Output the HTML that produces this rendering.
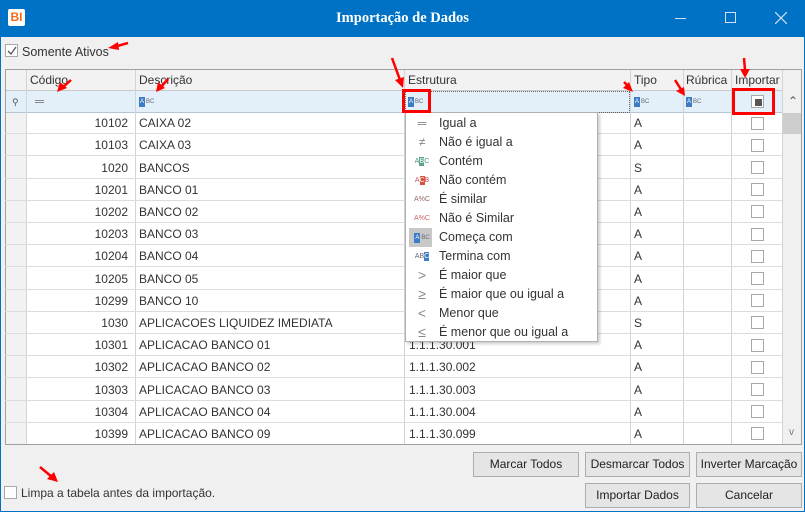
<!DOCTYPE html>
<html><head><meta charset="utf-8"><style>
*{box-sizing:border-box;margin:0;padding:0}
body{width:805px;height:512px;overflow:hidden;background:#f0f0f0;font-family:"Liberation Sans",sans-serif;font-size:12px;color:#333;position:relative}
.a{position:absolute}
.title{left:0;top:0;width:805px;height:37px;background:#0072c6;color:#fff}
.frame{left:0;top:37px;width:805px;height:475px;border:1px solid #0072c6;border-top:none}
.grid{left:5px;top:69px;width:797px;height:376px;border:1px solid #a0a0a0;background:#fff;overflow:hidden}
.hdr{background:#f2f2f2;border-bottom:1px solid #c8c8c8}
.vl{width:1px;background:#d4d4d4}
.row{left:0;width:777px;height:1px;background:#dcdcdc}
.t{position:absolute;white-space:nowrap;font-size:12px;line-height:14px;color:#333}
.cb{width:13px;height:13px;border:1px solid #a8a8a8;background:#fff}
.btn{height:25px;border:1px solid #adadad;background:#e5e5e5;text-align:center;line-height:23px;font-size:12px;color:#222}
.abc{display:flex;align-items:center;height:10px;font-size:6px;line-height:10px;color:#667}
.abc b{display:block;width:6px;height:10px;background:#3d7cc4;color:#fff;font-size:6px;text-align:center;line-height:10px;font-weight:normal;margin-right:1px}
.menu{left:405px;top:112px;width:193px;height:230px;background:#fff;border:1px solid #b0b0b0;box-shadow:2px 2px 3px rgba(0,0,0,.2)}
.mi{position:absolute;left:33px;font-size:12.5px;line-height:15px;color:#333;white-space:nowrap}
.ic{position:absolute;left:6px;width:20px;height:15px;display:flex;align-items:center;justify-content:center;color:#888;font-size:12px;line-height:15px}
.s7{font-size:7px;line-height:10px}
.s7 span{display:block;width:5px;height:9px;line-height:9px;text-align:center;color:#fff}
</style></head><body>
<div class="a title">
 <div class="a" style="left:8px;top:9px;width:17px;height:17px;background:#fff;border-radius:2px;color:#f26b1d;font-weight:bold;font-size:12px;line-height:17px;text-align:center">BI</div>
 <div class="a" style="left:0;width:805px;top:10px;text-align:center;font-family:'Liberation Serif',serif;font-weight:bold;font-size:14.5px">Importação de Dados</div>
 <div class="a" style="left:675px;top:18px;width:11px;height:1px;background:#cfe0f3"></div>
 <div class="a" style="left:725px;top:12px;width:11px;height:11px;border:1px solid #cfe0f3"></div>
 <svg class="a" style="left:775px;top:12px" width="12" height="12"><path d="M0 0L12 12M12 0L0 12" stroke="#cfe0f3" stroke-width="1.2"/></svg>
</div>
<div class="a frame"></div>

<div class="a cb" style="left:5px;top:44px"></div>
<svg class="a" style="left:6px;top:45px" width="12" height="12"><path d="M2 6L5 9L10 2" stroke="#555" fill="none" stroke-width="1.3"/></svg>
<div class="t" style="left:22px;top:45px;font-size:12.5px">Somente Ativos</div>

<div class="a grid">
 <div class="a hdr" style="left:0;top:0;width:795px;height:21px"></div>
 <div class="a" style="left:0;top:21px;width:777px;height:22px;background:#e3eff9;border-bottom:1px solid #b8c4d0"></div>
 <div class="a" style="left:0;top:43px;width:20px;height:333px;background:#f2f2f2"></div>
 <div class="a" style="left:777px;top:0;width:18px;height:376px;background:#f0f0f0"></div>
 <div class="a" style="left:777px;top:43px;width:18px;height:21px;background:#cdcdcd"></div>
 <div class="t" style="left:782px;top:24px;color:#555">&#8963;</div>
 <div class="t" style="left:783px;top:356px;color:#777;font-size:10px">v</div>
 <div class="a vl" style="left:20px;top:0;height:376px"></div>
 <div class="a vl" style="left:129px;top:0;height:376px"></div>
 <div class="a vl" style="left:398px;top:0;height:376px"></div>
 <div class="a vl" style="left:624px;top:0;height:376px"></div>
 <div class="a vl" style="left:677px;top:0;height:376px"></div>
 <div class="a vl" style="left:725px;top:0;height:376px"></div>
 <div class="a vl" style="left:776px;top:0;height:376px"></div>
 <div class="t" style="left:24px;top:3px">Código</div>
 <div class="t" style="left:133px;top:3px">Descrição</div>
 <div class="t" style="left:402px;top:3px">Estrutura</div>
 <div class="t" style="left:628px;top:3px">Tipo</div>
 <div class="t" style="left:680px;top:3px">Rúbrica</div>
 <div class="t" style="left:729px;top:3px">Importar</div>
 <div class="t" style="left:6px;top:25px;font-size:9px;color:#555">&#9906;</div>
 <div class="a" style="left:29px;top:30px;width:9px;height:3px;border-top:1px solid #888;border-bottom:1px solid #888"></div>
 <div class="a" style="left:133px;top:27px"><span class="abc"><b>A</b>BC</span></div>
 <div class="a" style="left:402px;top:27px"><span class="abc"><b>A</b>BC</span></div>
 <div class="a" style="left:628px;top:27px"><span class="abc"><b>A</b>BC</span></div>
 <div class="a" style="left:680px;top:27px"><span class="abc"><b>A</b>BC</span></div>
 <div class="a" style="left:399px;top:21px;width:225px;height:22px;border:1px dotted #666"></div>
 <div class="a cb" style="left:745px;top:25px"></div>
 <div class="a" style="left:749px;top:29px;width:7px;height:7px;background:#555"></div>
</div>

<div class="a" style="left:5px;top:69px;width:797px;height:376px;overflow:hidden">
<div class="a row" style="top:64px"></div><div class="a row" style="top:86px"></div><div class="a row" style="top:109px"></div><div class="a row" style="top:131px"></div><div class="a row" style="top:153px"></div><div class="a row" style="top:175px"></div><div class="a row" style="top:197px"></div><div class="a row" style="top:220px"></div><div class="a row" style="top:242px"></div><div class="a row" style="top:264px"></div><div class="a row" style="top:286px"></div><div class="a row" style="top:308px"></div><div class="a row" style="top:331px"></div><div class="a row" style="top:353px"></div>
</div>

<div class="a" style="left:0;top:0;width:805px;height:512px;font-size:12px">
<div class="t" style="right:677px;top:116px">10102</div><div class="t" style="left:139px;top:116px">CAIXA 02</div><div class="t" style="left:634px;top:116px">A</div>
<div class="t" style="right:677px;top:138px">10103</div><div class="t" style="left:139px;top:138px">CAIXA 03</div><div class="t" style="left:634px;top:138px">A</div>
<div class="t" style="right:677px;top:161px">1020</div><div class="t" style="left:139px;top:161px">BANCOS</div><div class="t" style="left:634px;top:161px">S</div>
<div class="t" style="right:677px;top:183px">10201</div><div class="t" style="left:139px;top:183px">BANCO 01</div><div class="t" style="left:634px;top:183px">A</div>
<div class="t" style="right:677px;top:205px">10202</div><div class="t" style="left:139px;top:205px">BANCO 02</div><div class="t" style="left:634px;top:205px">A</div>
<div class="t" style="right:677px;top:227px">10203</div><div class="t" style="left:139px;top:227px">BANCO 03</div><div class="t" style="left:634px;top:227px">A</div>
<div class="t" style="right:677px;top:249px">10204</div><div class="t" style="left:139px;top:249px">BANCO 04</div><div class="t" style="left:634px;top:249px">A</div>
<div class="t" style="right:677px;top:272px">10205</div><div class="t" style="left:139px;top:272px">BANCO 05</div><div class="t" style="left:634px;top:272px">A</div>
<div class="t" style="right:677px;top:294px">10299</div><div class="t" style="left:139px;top:294px">BANCO 10</div><div class="t" style="left:634px;top:294px">A</div>
<div class="t" style="right:677px;top:316px">1030</div><div class="t" style="left:139px;top:316px">APLICACOES LIQUIDEZ IMEDIATA</div><div class="t" style="left:634px;top:316px">S</div>
<div class="t" style="right:677px;top:338px">10301</div><div class="t" style="left:139px;top:338px">APLICACAO BANCO 01</div><div class="t" style="left:409px;top:338px">1.1.1.30.001</div><div class="t" style="left:634px;top:338px">A</div>
<div class="t" style="right:677px;top:360px">10302</div><div class="t" style="left:139px;top:360px">APLICACAO BANCO 02</div><div class="t" style="left:409px;top:360px">1.1.1.30.002</div><div class="t" style="left:634px;top:360px">A</div>
<div class="t" style="right:677px;top:383px">10303</div><div class="t" style="left:139px;top:383px">APLICACAO BANCO 03</div><div class="t" style="left:409px;top:383px">1.1.1.30.003</div><div class="t" style="left:634px;top:383px">A</div>
<div class="t" style="right:677px;top:405px">10304</div><div class="t" style="left:139px;top:405px">APLICACAO BANCO 04</div><div class="t" style="left:409px;top:405px">1.1.1.30.004</div><div class="t" style="left:634px;top:405px">A</div>
<div class="t" style="right:677px;top:427px">10399</div><div class="t" style="left:139px;top:427px">APLICACAO BANCO 09</div><div class="t" style="left:409px;top:427px">1.1.1.30.099</div><div class="t" style="left:634px;top:427px">A</div>
</div>
<div class="a cb" style="left:751px;top:117px"></div><div class="a cb" style="left:751px;top:139px"></div><div class="a cb" style="left:751px;top:161px"></div><div class="a cb" style="left:751px;top:183px"></div><div class="a cb" style="left:751px;top:205px"></div><div class="a cb" style="left:751px;top:228px"></div><div class="a cb" style="left:751px;top:250px"></div><div class="a cb" style="left:751px;top:272px"></div><div class="a cb" style="left:751px;top:294px"></div><div class="a cb" style="left:751px;top:316px"></div><div class="a cb" style="left:751px;top:339px"></div><div class="a cb" style="left:751px;top:361px"></div><div class="a cb" style="left:751px;top:383px"></div><div class="a cb" style="left:751px;top:405px"></div><div class="a cb" style="left:751px;top:427px"></div>

<div class="a menu">
 <div class="ic" style="top:3px">═</div><div class="mi" style="top:3px">Igual a</div>
 <div class="ic" style="top:22px">≠</div><div class="mi" style="top:22px">Não é igual a</div>
 <div class="ic s7" style="top:41px;color:#4a9a7a">A<span style="background:#5aa58a">B</span>C</div><div class="mi" style="top:41px">Contém</div>
 <div class="ic s7" style="top:60px;color:#c55">A<span style="background:#d9533f">C</span>B</div><div class="mi" style="top:60px">Não contém</div>
 <div class="ic s7" style="top:79px;color:#966">A%C</div><div class="mi" style="top:79px">É similar</div>
 <div class="ic s7" style="top:98px;color:#c66">A%C</div><div class="mi" style="top:98px">Não é Similar</div>
 <div class="a" style="left:3px;top:115px;width:23px;height:19px;background:#c8c8c8"></div>
 <div class="ic" style="top:117px"><span class="abc"><b>A</b>BC</span></div><div class="mi" style="top:117px">Começa com</div>
 <div class="ic s7" style="top:136px;color:#667">AB<span style="background:#3d7cc4">C</span></div><div class="mi" style="top:136px">Termina com</div>
 <div class="ic" style="top:155px;font-size:14px">&gt;</div><div class="mi" style="top:155px">É maior que</div>
 <div class="ic" style="top:174px;font-size:14px">≥</div><div class="mi" style="top:174px">É maior que ou igual a</div>
 <div class="ic" style="top:193px;font-size:14px">&lt;</div><div class="mi" style="top:193px">Menor que</div>
 <div class="ic" style="top:212px;font-size:14px">≤</div><div class="mi" style="top:212px">É menor que ou igual a</div>
</div>

<div class="a" style="left:402px;top:89px;width:29px;height:24px;border:3px solid #f00"></div>
<div class="a" style="left:732px;top:88px;width:43px;height:27px;border:3px solid #f00"></div>

<div class="a btn" style="left:473px;top:452px;width:106px">Marcar Todos</div>
<div class="a btn" style="left:585px;top:452px;width:105px">Desmarcar Todos</div>
<div class="a btn" style="left:696px;top:452px;width:106px">Inverter Marcação</div>
<div class="a btn" style="left:585px;top:483px;width:105px">Importar Dados</div>
<div class="a btn" style="left:696px;top:483px;width:106px">Cancelar</div>
<div class="a cb" style="left:4px;top:486px"></div>
<div class="t" style="left:21px;top:486px">Limpa a tabela antes da importação.</div>

<svg class="a" style="left:0;top:0" width="805" height="512">
<g stroke="#f00" stroke-width="2.5" fill="#f00">
<line x1="128" y1="43" x2="114" y2="47"/><polygon points="108,48 118,42 119,50" stroke="none"/>
<line x1="71" y1="80" x2="62" y2="88"/><polygon points="57,92 60,82 67,88" stroke="none"/>
<line x1="168" y1="79" x2="161" y2="87"/><polygon points="156,92 158,82 165,88" stroke="none"/>
<line x1="392" y1="58" x2="400" y2="80"/><polygon points="403,88 395,80 404,77" stroke="none"/>
<line x1="624" y1="82" x2="630" y2="88"/><polygon points="633,92 623,88 629,82" stroke="none"/>
<line x1="675" y1="80" x2="682" y2="91"/><polygon points="685,96 676,91 684,87" stroke="none"/>
<line x1="744" y1="58" x2="745" y2="70"/><polygon points="745,78 740,69 750,69" stroke="none"/>
<line x1="40" y1="467" x2="52" y2="477"/><polygon points="58,482 47,479 54,472" stroke="none"/>
</g></svg>
</body></html>
